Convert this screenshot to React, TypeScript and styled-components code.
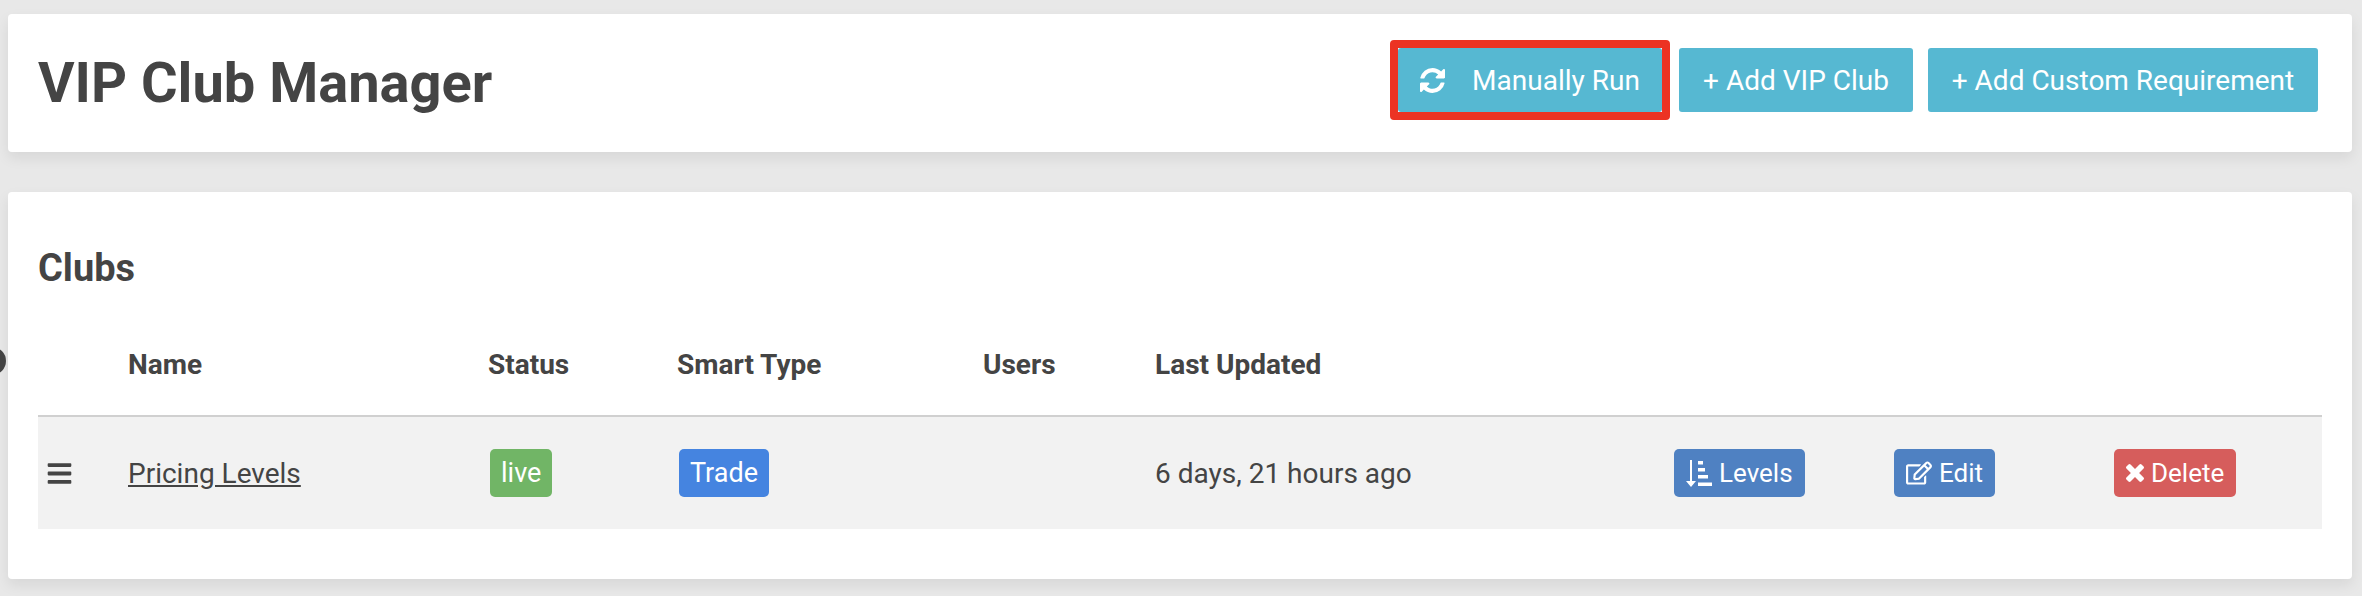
import React from 'react'
import styled, { createGlobalStyle } from 'styled-components'
import { FaBars, FaRegEdit } from 'react-icons/fa'

const GlobalStyle = createGlobalStyle`
  html, body {
    margin: 0;
    padding: 0;
    background: #e8e8e8;
    overflow: hidden;
  }
  body {
    font-family: Roboto, 'Liberation Sans', sans-serif;
    color: #444444;
  }
`

const Page = styled.div`
  position: relative;
  width: 2362px;
  height: 596px;
  padding: 14px 10px 0 8px;
  box-sizing: border-box;
`

const Card = styled.section`
  background: #ffffff;
  border-radius: 4px;
  box-shadow: 0 6px 14px rgba(0, 0, 0, 0.08);
`

const HeaderCard = styled(Card)`
  display: flex;
  align-items: center;
  justify-content: space-between;
  height: 138px;
  padding: 0 34px 0 30px;
  box-sizing: border-box;
  margin-bottom: 40px;
`

const Title = styled.h1`
  margin: 0;
  font-size: 56px;
  line-height: 64px;
  font-weight: 700;
`

const Actions = styled.div`
  display: flex;
  align-items: center;
  gap: 15px;
  margin-bottom: 6px;
`

const Highlight = styled.div`
  display: flex;
  border: 8px solid #ec3323;
  border-radius: 4px;
  margin-right: -6px;
`

const ActionButton = styled.button<{ $width: number }>`
  display: flex;
  align-items: center;
  justify-content: center;
  gap: 27px;
  width: ${({ $width }) => $width}px;
  height: 64px;
  border: 0;
  border-radius: 3px;
  background: #56b8d2;
  color: #ffffff;
  font-family: inherit;
  font-size: 28px;
  font-weight: 400;
  padding: 0;
`

const TableCard = styled(Card)`
  height: 387px;
  padding: 55px 30px 0;
  box-sizing: border-box;
`

const SectionTitle = styled.h2`
  margin: 0 0 38px;
  font-size: 38px;
  line-height: 42px;
  font-weight: 700;
`

const columns = '90px 360px 189px 306px 172px 519px 220px 220px 1fr'

const HeadRow = styled.div`
  display: grid;
  grid-template-columns: ${columns};
  align-items: center;
  height: 90px;
  padding-bottom: 13px;
  box-sizing: border-box;
  border-bottom: 2px solid #d0d0d0;
  font-size: 28px;
  font-weight: 700;
`

const BodyRow = styled.div`
  display: grid;
  grid-template-columns: ${columns};
  align-items: center;
  height: 112px;
  background: #f2f2f2;
  font-size: 28px;
`

const Handle = styled.div`
  display: flex;
  padding-left: 8px;
  font-size: 27px;
`

const NameLink = styled.a`
  color: #444444;
  text-decoration: underline;
`

const Badge = styled.span<{ $color: string }>`
  display: inline-flex;
  align-items: center;
  justify-content: center;
  height: 48px;
  padding: 0 11px;
  margin-left: 2px;
  border-radius: 5px;
  background: ${({ $color }) => $color};
  color: #ffffff;
  font-size: 27px;
`

const RowButton = styled.button<{ $color: string }>`
  display: inline-flex;
  align-items: center;
  gap: 7px;
  height: 48px;
  padding: 0 12px;
  border: 0;
  border-radius: 5px;
  background: ${({ $color }) => $color};
  color: #ffffff;
  font-family: inherit;
  font-size: 26px;
`

const EdgeDot = styled.div`
  position: absolute;
  left: -22px;
  top: 347px;
  width: 28px;
  height: 28px;
  border-radius: 50%;
  background: #444444;
`

function RefreshIcon() {
  return (
    <svg width="25" height="25" viewBox="0 0 1536 1536" fill="currentColor">
      <path d="M1511 928q0 5-1 7-64 268-268 434.5t-478 166.5q-146 0-282.5-55t-243.5-157l-129 129q-19 19-45 19t-45-19-19-45v-448q0-26 19-45t45-19h448q26 0 45 19t19 45-19 45l-137 137q71 66 161 102t187 36q134 0 250-65t186-179q11-17 53-117 8-23 30-23h192q13 0 22.5 9.5t9.5 22.5zm25-800v448q0 26-19 45t-45 19h-448q-26 0-45-19t-19-45 19-45l138-138q-148-137-349-137-134 0-250 65t-186 179q-11 17-53 117-8 23-30 23h-199q-13 0-22.5-9.5t-9.5-22.5v-7q65-268 270-434.5t480-166.5q146 0 284 55.5t245 156.5l130-129q19-19 45-19t45 19 19 45z" />
    </svg>
  )
}

function CloseIcon() {
  return (
    <svg width="18" height="18" viewBox="110 246 1188 1188" fill="currentColor">
      <path d="M1298 1202q0 40-28 68l-136 136q-28 28-68 28t-68-28l-294-294-294 294q-28 28-68 28t-68-28l-136-136q-28-28-28-68t28-68l294-294-294-294q-28-28-28-68t28-68l136-136q28-28 68-28t68 28l294 294 294-294q28-28 68-28t68 28l136 136q28 28 28 68t-28 68l-294 294 294 294q28 28 28 68z" />
    </svg>
  )
}

function SortLevelsIcon() {
  return (
    <svg width="26" height="27" viewBox="0 0 26 27" fill="currentColor">
      <path d="M4 0h2v21h4l-5 6-5-6h4z" />
      <rect x="12" y="1" width="5" height="3.5" />
      <rect x="12" y="8" width="7" height="3.5" />
      <rect x="12" y="15" width="10" height="3.5" />
      <rect x="12" y="22.5" width="14" height="3.5" />
    </svg>
  )
}

export default function App() {
  return (
    <Page>
      <GlobalStyle />
      <EdgeDot />
      <HeaderCard>
        <Title>VIP Club Manager</Title>
        <Actions>
          <Highlight>
            <ActionButton $width={264}>
              <RefreshIcon />
              Manually Run
            </ActionButton>
          </Highlight>
          <ActionButton $width={234}>+ Add VIP Club</ActionButton>
          <ActionButton $width={390}>+ Add Custom Requirement</ActionButton>
        </Actions>
      </HeaderCard>
      <TableCard>
        <SectionTitle>Clubs</SectionTitle>
        <HeadRow>
          <span />
          <span>Name</span>
          <span>Status</span>
          <span>Smart Type</span>
          <span>Users</span>
          <span>Last Updated</span>
          <span />
          <span />
          <span />
        </HeadRow>
        <BodyRow>
          <Handle>
            <FaBars />
          </Handle>
          <div>
            <NameLink href="#">Pricing Levels</NameLink>
          </div>
          <div>
            <Badge $color="#71b566">live</Badge>
          </div>
          <div>
            <Badge $color="#4584e0">Trade</Badge>
          </div>
          <span />
          <span>6 days, 21 hours ago</span>
          <div>
            <RowButton $color="#4f81c2">
              <SortLevelsIcon />
              Levels
            </RowButton>
          </div>
          <div>
            <RowButton $color="#4f81c2">
              <FaRegEdit size={26} />
              Edit
            </RowButton>
          </div>
          <div>
            <RowButton $color="#d65d5c">
              <CloseIcon />
              Delete
            </RowButton>
          </div>
        </BodyRow>
      </TableCard>
    </Page>
  )
}
